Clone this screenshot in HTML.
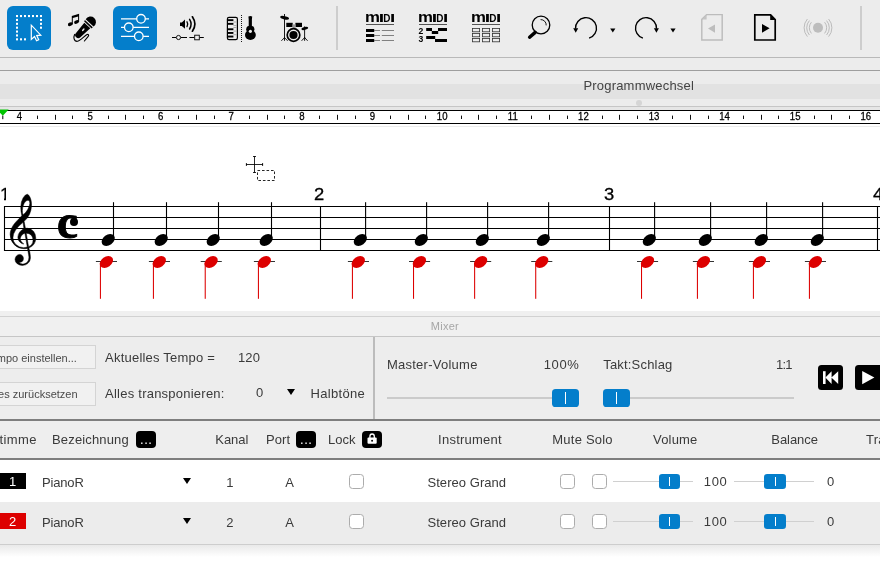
<!DOCTYPE html>
<html lang="de">
<head>
<meta charset="utf-8">
<title>Mixer</title>
<style>
html,body{margin:0;padding:0;}
body{width:880px;height:580px;overflow:hidden;background:#fff;position:relative;
  font-family:"Liberation Sans",sans-serif;color:#333;}
#app{position:absolute;left:0;top:0;width:880px;height:580px;overflow:hidden;will-change:transform;}
.abs{position:absolute;}
#toolbar{left:0;top:0;width:880px;height:57px;background:#ececec;}
#strip1{left:0;top:57px;width:880px;height:53px;background:#ececec;}
.hl{position:absolute;left:0;width:880px;height:1px;}
.tbtn{position:absolute;top:6px;width:44px;height:44px;border-radius:6px;background:#047ecb;}
.vsep{position:absolute;top:6px;width:2px;height:44px;background:#cdcdcd;}
#ruler{left:0;top:110px;width:880px;height:12px;background:#fff;border-top:1px solid #000;border-bottom:1px solid #000;}
#score{left:0;top:125px;width:880px;height:186px;background:#fff;}
#mixer{left:0;top:311px;width:880px;height:109px;background:#ededed;}
.mn{position:absolute;top:58.6px;font-size:17.2px;line-height:20px;color:#000;-webkit-text-stroke:0.3px #000;transform:scaleX(1.07);transform-origin:0 0;}
.t{position:absolute;white-space:nowrap;line-height:16px;font-size:13px;color:#3a3a3a;}
.btn{position:absolute;height:20px;background:#f1f1f1;border:1px solid #d4d4d4;box-sizing:border-box;}
#thead{left:0;top:421px;width:880px;height:37px;background:#eeeeee;}
#row1{left:0;top:460px;width:880px;height:42px;background:#fff;}
#row2{left:0;top:502px;width:880px;height:42px;background:#ececec;}
.badge{position:absolute;left:0;width:26px;height:15.8px;color:#fff;font-size:13px;line-height:17.2px;text-align:center;text-indent:-0.6px;}
.cb{position:absolute;width:14.5px;height:14.4px;border:1.4px solid #acacac;border-radius:3.5px;background:#fff;box-sizing:border-box;}
.track{position:absolute;height:1px;background:#d0d0d0;}
.knob{position:absolute;width:21.9px;height:15.3px;border-radius:3.2px;background:#047ecb;}
.knob:after{content:"";position:absolute;left:10.5px;top:3px;width:1px;height:9.4px;background:#fff;}

.s11{font-size:11px !important;color:#4a4a4a !important;}
.c{text-align:center;}
.tri{position:absolute;width:0;height:0;border-left:4.1px solid transparent;border-right:4.1px solid transparent;border-top:6px solid #000;}
.dots{position:absolute;width:19.6px;height:17.2px;color:#fff;font-size:13px;line-height:17.6px;text-align:center;letter-spacing:0.5px;text-indent:0.5px;}
.knob.big{width:27.4px;height:18.3px;border-radius:3.6px;}
.knob.big:after{left:13.25px;top:3.4px;width:0.95px;height:11.8px;}
.bk{position:absolute;background:#000;border-radius:3px;}
svg{position:absolute;left:0;top:0;overflow:visible;}
</style>
</head>
<body>
<div id="app">
<div id="toolbar" class="abs">
<div class="tbtn" style="left:7px"></div>
<div class="tbtn" style="left:113px"></div>
<div class="vsep" style="left:336px"></div>
<div class="vsep" style="left:860px"></div>
<svg id="tbicons" width="880" height="57" viewBox="0 0 880 57">
<!-- select tool -->
<g fill="#fff"><rect x="16" y="15" width="2" height="2.1"/><rect x="20" y="15" width="2" height="2.1"/><rect x="24" y="15" width="2" height="2.1"/><rect x="28" y="15" width="2" height="2.1"/><rect x="32" y="15" width="2" height="2.1"/><rect x="36" y="15" width="2" height="2.1"/><rect x="40" y="15" width="2" height="2.1"/><rect x="16" y="18.88" width="2" height="2.1"/><rect x="16" y="22.76" width="2" height="2.1"/><rect x="16" y="26.64" width="2" height="2.1"/><rect x="16" y="30.52" width="2" height="2.1"/><rect x="16" y="34.40" width="2" height="2.1"/><rect x="16" y="38.28" width="2" height="2.1"/><rect x="40" y="18.88" width="2" height="2.1"/><rect x="40" y="22.76" width="2" height="2.1"/><rect x="40" y="26.64" width="2" height="2.1"/><rect x="20" y="38.28" width="2" height="2.1"/><rect x="24" y="38.28" width="2" height="2.1"/></g>
<path d="M31.3 25.2 L31.3 39.4 L34.5 36.5 L36.6 40.7 L38.7 39.7 L36.7 35.6 L40.8 35.2 Z" fill="#047ecb" stroke="#fff" stroke-width="1.2" stroke-linejoin="miter"/>
<!-- mic -->
<g fill="#000" stroke="none">
<ellipse cx="70.3" cy="24.2" rx="2.5" ry="1.7" transform="rotate(-22 70.3 24.2)"/>
<ellipse cx="76.5" cy="22" rx="2.5" ry="1.7" transform="rotate(-22 76.5 22)"/>
<path d="M71.8 15.9 L79.1 13.8 L79.1 22 L78.1 22 L78.1 16.6 L72.8 18.1 L72.8 24.2 L71.8 24.2 Z"/>
<g transform="translate(90.5 22) rotate(43)">
<path d="M-5.35 1.3 A5.5 5.5 0 1 1 5.35 1.3 Z"/>
<rect x="-5.3" y="2.3" width="10.6" height="1.6" rx="0.5"/>
<path d="M-4.1 4.7 H4.1 L3 18 A3 3 0 0 1 -3 18 Z"/>
<ellipse cx="0" cy="10.6" rx="0.8" ry="1.7" fill="#ececec"/>
</g>
</g>
<path d="M74.6 34.4 C73.4 37 73.6 41.5 77.4 41.3 C79.6 41.2 84 36.4 86.6 34.7 C88.4 33.7 89.3 35.4 88 36.7 L84.4 41" fill="none" stroke="#000" stroke-width="1.15" stroke-linecap="round"/>
<!-- sliders -->
<g stroke="#fff" stroke-width="1.3" fill="#047ecb">
<path d="M121 18.8 H149 M121 27.3 H149 M121 36.3 H149"/>
<circle cx="141" cy="18.8" r="4.3"/><circle cx="128.8" cy="27.3" r="4.3"/><circle cx="138.8" cy="36.3" r="4.3"/>
</g>
<!-- speaker / automation -->
<path d="M180 22.4 H181.8 L185 19.6 V28.8 L181.8 26 H180 Z" fill="#000"/>
<g fill="none" stroke="#000" stroke-linecap="round">
<path d="M187 21.8 Q188.6 24.2 187 26.6" stroke-width="1.3"/>
<path d="M189.6 19.4 Q192.6 24.2 189.6 29" stroke-width="1.5"/>
<path d="M192.4 16.8 Q197.4 24.2 192.4 31.2" stroke-width="1.7"/>
</g>
<path d="M172 37.5 H176.3 M180.8 37.5 H187 M189.4 37.5 H194.4 M199.6 37.5 H203.8" stroke="#000" stroke-width="1"/>
<circle cx="178.5" cy="37.5" r="2.1" fill="#ececec" stroke="#000" stroke-width="0.9"/>
<rect x="194.7" y="35.2" width="4.6" height="4.6" fill="#ececec" stroke="#000" stroke-width="0.9"/>
<!-- piano / guitar -->
<rect x="227.4" y="17.4" width="10" height="22.2" rx="1.6" fill="#ececec" stroke="#000" stroke-width="1.2"/>
<g fill="#000"><rect x="227.6" y="19.2" width="5.8" height="1.9"/><rect x="227.6" y="22.9" width="5.8" height="1.9"/><rect x="227.6" y="28.3" width="5.8" height="1.9"/><rect x="227.6" y="32" width="5.8" height="1.9"/><rect x="227.6" y="35.6" width="5.8" height="1.9"/></g>
<g fill="#a8a8a8"><rect x="233.4" y="21.5" width="3.4" height="1"/><rect x="233.4" y="25.1" width="3.4" height="1"/><rect x="233.4" y="27" width="3.4" height="1"/><rect x="233.4" y="30.6" width="3.4" height="1"/><rect x="233.4" y="34.2" width="3.4" height="1"/></g>
<path d="M241.5 15 V42" stroke="#000" stroke-width="0.9" stroke-dasharray="1 1"/>
<path d="M248.4 16.6 Q250.3 15.6 252.2 16.6 L251.9 19.4 L251.9 26.4 L248.7 26.4 L248.7 19.4 Z" fill="#000"/>
<ellipse cx="250.3" cy="29.2" rx="4.1" ry="3.4" fill="#000"/><ellipse cx="250.4" cy="35" rx="5.4" ry="5" fill="#000"/>
<circle cx="250.4" cy="31.3" r="1.6" fill="#ececec"/>
<!-- drums -->
<g stroke="#000" fill="none" stroke-width="0.9">
<path d="M284.5 14 V38 M284.5 37.6 L281.4 40.8 M284.5 37.6 L287.6 40.8 M284.5 37 V40.8"/>
<path d="M304.6 26.4 V38 M304.6 37.6 L301.6 40.8 M304.6 37.6 L307.6 40.8 M304.6 37 V40.8"/>
</g>
<ellipse cx="284.6" cy="17.8" rx="4.5" ry="1.7" fill="#000" transform="rotate(12 284.6 17.8)"/>
<ellipse cx="304.8" cy="28.4" rx="3.4" ry="1.5" fill="#000" transform="rotate(-14 304.8 28.4)"/>
<rect x="286.3" y="22.8" width="6.4" height="4.2" fill="#000"/><rect x="295.4" y="22.8" width="6.6" height="4.2" fill="#000"/>
<rect x="292.4" y="24.4" width="3.2" height="3.6" fill="#9a9a9a"/>
<circle cx="293.5" cy="35" r="6.3" fill="#ececec" stroke="#000" stroke-width="1.7"/>
<circle cx="293.5" cy="35" r="4.1" fill="#000"/>

<!-- separators drawn as divs -->
<!-- MIDI icons -->
<g font-family="'Liberation Sans',sans-serif" font-weight="bold" fill="#000">
<text transform="translate(364.89 21.9) scale(1.681 1.467)" font-size="10.0">m</text><text transform="translate(378.70 21.9) scale(1.944 1.148)" font-size="10.0">I</text><text transform="translate(383.33 21.9) scale(0.995 1.148)" font-size="10.0">D</text><text transform="translate(390.05 21.9) scale(1.874 1.148)" font-size="10.0">I</text>
<text transform="translate(417.89 21.9) scale(1.681 1.467)" font-size="10.0">m</text><text transform="translate(431.70 21.9) scale(1.944 1.148)" font-size="10.0">I</text><text transform="translate(436.33 21.9) scale(0.995 1.148)" font-size="10.0">D</text><text transform="translate(443.05 21.9) scale(1.874 1.148)" font-size="10.0">I</text>
<text transform="translate(470.89 21.9) scale(1.681 1.467)" font-size="10.0">m</text><text transform="translate(484.70 21.9) scale(1.944 1.148)" font-size="10.0">I</text><text transform="translate(489.33 21.9) scale(0.995 1.148)" font-size="10.0">D</text><text transform="translate(496.05 21.9) scale(1.874 1.148)" font-size="10.0">I</text>
<text x="418.6" y="34.2" font-size="8.6">2</text>
<text x="418.6" y="42.2" font-size="8.6">3</text>
</g>
<path d="M366 24.5 H394 M419 24.5 H447 M472 24.5 H500" stroke="#444" stroke-width="0.9"/>
<g fill="#000"><rect x="366" y="29" width="8.2" height="3"/><rect x="366" y="34" width="8.2" height="3"/><rect x="366" y="39" width="8.2" height="3"/></g>
<path d="M374 30.5 H380 M381.8 30.5 H394 M374 35.5 H380 M381.8 35.5 H394 M374 40.5 H380 M381.8 40.5 H394" stroke="#666" stroke-width="0.8"/>
<g fill="#000"><rect x="426.2" y="28" width="5.8" height="3"/><rect x="431.8" y="31" width="6.4" height="3"/><rect x="438" y="28" width="9" height="3"/><rect x="426.2" y="36" width="9" height="3"/><rect x="435" y="39" width="12" height="3"/></g>
<g fill="none" stroke="#333" stroke-width="0.8">
<rect x="472.4" y="28.4" width="7.2" height="3.4"/><rect x="482.4" y="28.4" width="7.2" height="3.4"/><rect x="492.4" y="28.4" width="7.2" height="3.4"/>
<rect x="472.4" y="33.4" width="7.2" height="3.4"/><rect x="482.4" y="33.4" width="7.2" height="3.4"/><rect x="492.4" y="33.4" width="7.2" height="3.4"/>
<rect x="472.4" y="38.4" width="7.2" height="3.4"/><rect x="482.4" y="38.4" width="7.2" height="3.4"/><rect x="492.4" y="38.4" width="7.2" height="3.4"/>
</g>
<!-- magnifier -->
<circle cx="541" cy="25" r="8.8" fill="none" stroke="#000" stroke-width="1.3"/>
<path d="M540.6 19.6 A5.4 5.4 0 0 1 546.2 25.4" fill="none" stroke="#000" stroke-width="0.9"/>
<path d="M535.2 32.4 L529.6 37.2" stroke="#000" stroke-width="3.4" stroke-linecap="round"/>
<!-- undo -->
<path d="M575.5 28.7 A10.5 10.5 0 1 1 589.1 38.2" fill="none" stroke="#000" stroke-width="1.37"/>
<path d="M573.2 28.3 H578.2 L575.7 32.7 Z" fill="#000"/>
<path d="M610.2 28.5 H615.4 L612.8 32.6 Z" fill="#000"/>
<!-- redo -->
<path d="M656.5 28.7 A10.5 10.5 0 1 0 642.9 38.2" fill="none" stroke="#000" stroke-width="1.37"/>
<path d="M653.9 28.3 H658.9 L656.4 32.7 Z" fill="#000"/>
<path d="M670.4 28.5 H675.6 L673 32.6 Z" fill="#000"/>
<!-- page prev (disabled) -->
<path d="M706.6 14.6 H722.2 V40 H701.8 V19.4 Z" fill="none" stroke="#bcbcbc" stroke-width="1.45"/>
<path d="M706.6 14.6 V19.4 H701.8 Z" fill="#c4c4c4"/>
<path d="M708 28.5 L715 24.4 V32.7 Z" fill="#bdbdbd"/>
<!-- page next -->
<path d="M754.8 14.8 H770.6 L775.2 19.6 V40 H754.8 Z" fill="none" stroke="#000" stroke-width="1.7"/>
<path d="M770.2 14.4 V20 H775.8 Z" fill="#000"/>
<path d="M762 23.9 L769.6 28.3 L762 32.7 Z" fill="#000"/>
<!-- record (disabled) -->
<circle cx="818" cy="27.8" r="5" fill="#bdbdbd"/>
<g fill="none" stroke="#b8b8b8" stroke-width="0.95">
<path d="M811.4 22.2 A8.6 8.6 0 0 0 811.4 33.4 M824.6 22.2 A8.6 8.6 0 0 1 824.6 33.4"/>
<path d="M809.4 20.6 A11 11 0 0 0 809.4 35 M826.6 20.6 A11 11 0 0 1 826.6 35"/>
<path d="M807.4 19 A13.4 13.4 0 0 0 807.4 36.6 M828.6 19 A13.4 13.4 0 0 1 828.6 36.6"/>
</g>
</svg>
</div>
<div id="strip1" class="abs">
<div class="hl" style="top:0;background:#b9b9b9"></div>
<div class="hl" style="top:13px;background:#9e9e9e"></div>
<div class="abs" style="left:0;top:27px;width:880px;height:15px;background:#e2e2e2"></div>
<div class="hl" style="top:49px;background:#c6c6c6"></div>
<div class="abs" style="left:0;top:50px;width:880px;height:3px;background:#e6e6e6"></div>
<div class="t" id="t_prog" style="left:583.4px;top:21px;font-size:13px;color:#444;letter-spacing:0.2px">Programmwechsel</div>
<div class="abs" style="left:636px;top:42.5px;width:6px;height:6px;border-radius:3px;background:#d5d5d5"></div>
</div>
<div id="ruler" class="abs">
<svg width="880" height="14" viewBox="0 110 880 14" style="top:-1px">
<path d="M-3 109.6 H8.7 L2.8 115.8 Z" fill="#00c400"/>
<path d="M2.8 115.6 V119.2" stroke="#000" stroke-width="1"/>
<path d="M37.5 115.6 V119 M55.5 114.8 V119.8 M72.5 115.6 V119 M108.5 115.6 V119 M125.5 114.8 V119.8 M143.5 115.6 V119 M178.5 115.6 V119 M196.5 114.8 V119.8 M214.5 115.6 V119 M249.5 115.6 V119 M267.5 114.8 V119.8 M284.5 115.6 V119 M319.5 115.6 V119 M337.5 114.8 V119.8 M355.5 115.6 V119 M390.5 115.6 V119 M408.5 114.8 V119.8 M425.5 115.6 V119 M461.5 115.6 V119 M478.5 114.8 V119.8 M496.5 115.6 V119 M531.5 115.6 V119 M549.5 114.8 V119.8 M567.5 115.6 V119 M602.5 115.6 V119 M619.5 114.8 V119.8 M637.5 115.6 V119 M672.5 115.6 V119 M690.5 114.8 V119.8 M708.5 115.6 V119 M743.5 115.6 V119 M761.5 114.8 V119.8 M778.5 115.6 V119 M814.5 115.6 V119 M831.5 114.8 V119.8 M849.5 115.6 V119 M884.5 115.6 V119 M902.5 114.8 V119.8 M920.5 115.6 V119 " stroke="#111" stroke-width="1" fill="none"/>
<g font-family="'Liberation Sans',sans-serif" font-size="9.6" text-anchor="middle" fill="#000" stroke="#000" stroke-width="0.25" transform="translate(0,119.9) scale(1,1.06)"><text x="19.5" y="0">4</text><text x="90.1" y="0">5</text><text x="160.7" y="0">6</text><text x="231.3" y="0">7</text><text x="301.9" y="0">8</text><text x="372.5" y="0">9</text><text x="442.2" y="0">10</text><text x="512.8" y="0">11</text><text x="583.4" y="0">12</text><text x="654.0" y="0">13</text><text x="724.6" y="0">14</text><text x="795.2" y="0">15</text><text x="865.8" y="0">16</text></g>
</svg>
</div>
<div id="score" class="abs">
<div class="hl" style="top:1px;background:#ececec"></div>
<svg width="880" height="186" viewBox="0 125 880 186">
<path d="M4 206.5 H880 M4 217.5 H880 M4 228.5 H880 M4 239.5 H880 M4 250.5 H880" stroke="#000" stroke-width="1"/>
<path d="M4.5 206 V251 M320.5 206 V251 M609.5 206 V251 M877.5 206 V251" stroke="#000" stroke-width="1.1"/>
<path d="M95.9 261.5 H117.0 M148.9 261.5 H170.0 M200.7 261.5 H221.8 M253.9 261.5 H275.0 M347.9 261.5 H369.0 M409.0 261.5 H430.1 M470.1 261.5 H491.2 M531.2 261.5 H552.3 M637.0 261.5 H658.1 M692.9 261.5 H714.0 M748.9 261.5 H770.0 M804.9 261.5 H826.0 " stroke="#000" stroke-width="0.8"/>
<g transform="translate(0,232) skewX(-1.8) translate(0,-232) translate(10.2,194.3) scale(0.06114,-0.05970) translate(-120,-900)"><path d="M434 2Q464 -103 464 -170Q464 -223 427.0 -257.0Q390 -291 337 -291Q287 -291 250.0 -261.5Q213 -232 213 -190Q213 -160 233.5 -133.5Q254 -107 283.5 -107.0Q313 -107 331.5 -128.5Q350 -150 350 -178Q350 -240 280 -240Q298 -268 338 -268Q353 -268 368.5 -263.5Q384 -259 401.0 -248.0Q418 -237 428.5 -213.5Q439 -190 439 -157Q439 -136 411 -6Q389 -12 356 -12Q259 -12 189.5 60.0Q120 132 120 232Q120 267 131.5 303.0Q143 339 157.5 366.5Q172 394 200.5 428.5Q229 463 248.5 483.5Q268 504 303 539Q280 621 280 689Q280 779 313.0 839.5Q346 900 379 900Q389 900 401.5 887.0Q414 874 426.0 851.0Q438 828 446.5 790.5Q455 753 455 710Q455 551 342 447L368 329Q384 332 397 332Q458 332 500.0 282.5Q542 233 542 162Q542 44 434 2ZM426 746Q426 801 394 801Q358 801 333.0 748.0Q308 695 308 630Q308 588 321 557Q359 580 392.5 639.5Q426 699 426 746ZM498 128Q498 183 466.0 216.0Q434 249 383 249L428 23Q498 52 498 128ZM407 17 361 247Q334 241 311.5 214.0Q289 187 289 158Q289 143 295.0 128.5Q301 114 309.5 104.0Q318 94 327.0 86.0Q336 78 342.0 74.5Q348 71 348 71L340 66Q307 75 277.5 106.0Q248 137 248 184Q248 231 277.5 270.5Q307 310 343 323L325 430Q168 299 168 177Q168 104 223.0 55.0Q278 6 348 6Q365 6 407 17Z" fill="#000" stroke="#000" stroke-width="8" stroke-linejoin="round"/></g>
<g fill="#000"><ellipse cx="108.2" cy="240" rx="7.2" ry="5.2" transform="rotate(-35 108.2 240)"/><rect x="112.95" y="202.2" width="1.1" height="36"/><ellipse cx="161.2" cy="240" rx="7.2" ry="5.2" transform="rotate(-35 161.2 240)"/><rect x="165.95" y="202.2" width="1.1" height="36"/><ellipse cx="213.2" cy="240" rx="7.2" ry="5.2" transform="rotate(-35 213.2 240)"/><rect x="217.95" y="202.2" width="1.1" height="36"/><ellipse cx="266.2" cy="240" rx="7.2" ry="5.2" transform="rotate(-35 266.2 240)"/><rect x="270.95" y="202.2" width="1.1" height="36"/><ellipse cx="360.3" cy="240" rx="7.2" ry="5.2" transform="rotate(-35 360.3 240)"/><rect x="365.05" y="202.2" width="1.1" height="36"/><ellipse cx="421.3" cy="240" rx="7.2" ry="5.2" transform="rotate(-35 421.3 240)"/><rect x="426.05" y="202.2" width="1.1" height="36"/><ellipse cx="482.3" cy="240" rx="7.2" ry="5.2" transform="rotate(-35 482.3 240)"/><rect x="487.05" y="202.2" width="1.1" height="36"/><ellipse cx="543.3" cy="240" rx="7.2" ry="5.2" transform="rotate(-35 543.3 240)"/><rect x="548.05" y="202.2" width="1.1" height="36"/><ellipse cx="649.3" cy="240" rx="7.2" ry="5.2" transform="rotate(-35 649.3 240)"/><rect x="654.05" y="202.2" width="1.1" height="36"/><ellipse cx="705.3" cy="240" rx="7.2" ry="5.2" transform="rotate(-35 705.3 240)"/><rect x="710.05" y="202.2" width="1.1" height="36"/><ellipse cx="761.3" cy="240" rx="7.2" ry="5.2" transform="rotate(-35 761.3 240)"/><rect x="766.05" y="202.2" width="1.1" height="36"/><ellipse cx="817.3" cy="240" rx="7.2" ry="5.2" transform="rotate(-35 817.3 240)"/><rect x="822.05" y="202.2" width="1.1" height="36"/></g>
<g fill="#dd0000"><ellipse cx="106.4" cy="262" rx="7.2" ry="5.2" transform="rotate(-35 106.4 262)"/><rect x="99.90" y="263" width="1.05" height="35.8"/><ellipse cx="159.3" cy="262" rx="7.2" ry="5.2" transform="rotate(-35 159.3 262)"/><rect x="152.90" y="263" width="1.05" height="35.8"/><ellipse cx="211.1" cy="262" rx="7.2" ry="5.2" transform="rotate(-35 211.1 262)"/><rect x="204.70" y="263" width="1.05" height="35.8"/><ellipse cx="264.3" cy="262" rx="7.2" ry="5.2" transform="rotate(-35 264.3 262)"/><rect x="257.90" y="263" width="1.05" height="35.8"/><ellipse cx="358.3" cy="262" rx="7.2" ry="5.2" transform="rotate(-35 358.3 262)"/><rect x="351.90" y="263" width="1.05" height="35.8"/><ellipse cx="419.4" cy="262" rx="7.2" ry="5.2" transform="rotate(-35 419.4 262)"/><rect x="413.00" y="263" width="1.05" height="35.8"/><ellipse cx="480.6" cy="262" rx="7.2" ry="5.2" transform="rotate(-35 480.6 262)"/><rect x="474.10" y="263" width="1.05" height="35.8"/><ellipse cx="541.7" cy="262" rx="7.2" ry="5.2" transform="rotate(-35 541.7 262)"/><rect x="535.20" y="263" width="1.05" height="35.8"/><ellipse cx="647.5" cy="262" rx="7.2" ry="5.2" transform="rotate(-35 647.5 262)"/><rect x="641.00" y="263" width="1.05" height="35.8"/><ellipse cx="703.4" cy="262" rx="7.2" ry="5.2" transform="rotate(-35 703.4 262)"/><rect x="696.90" y="263" width="1.05" height="35.8"/><ellipse cx="759.4" cy="262" rx="7.2" ry="5.2" transform="rotate(-35 759.4 262)"/><rect x="752.90" y="263" width="1.05" height="35.8"/><ellipse cx="815.4" cy="262" rx="7.2" ry="5.2" transform="rotate(-35 815.4 262)"/><rect x="808.90" y="263" width="1.05" height="35.8"/></g>
<!-- cursor -->
<g stroke="#000" stroke-width="0.85" fill="none">
<path d="M254.5 156.2 V172.8 M246 164.5 H263 M253 156.5 H256 M253 172.5 H256 M246.4 163 V166 M262.6 163 V166"/>
<rect x="257.5" y="170.5" width="17" height="10" stroke-dasharray="2.6 1.9"/>
</g>
</svg>
<div class="abs" style="left:56.8px;top:66.5px;font-family:'Liberation Serif',serif;font-weight:bold;font-size:49px;line-height:60px;color:#000;-webkit-text-stroke:1px #000;transform:scaleX(0.96);transform-origin:0 0">c</div>
<div class="abs" style="left:69.9px;top:93.4px;width:7.8px;height:7.8px;border-radius:50%;background:#000"></div>
<div class="abs" style="left:0;top:58px;width:6.15px;height:22px;overflow:hidden"><div class="mn" style="left:-0.3px;top:0.6px">1</div><div class="abs" style="left:0;top:14.2px;width:4.3px;height:3.4px;background:#fff"></div></div><div class="mn" style="left:314.4px">2</div><div class="mn" style="left:603.9px">3</div><div class="mn" style="left:872.5px">4</div>
</div>
<div id="mixer" class="abs">
<div class="abs" style="left:0;top:0;width:880px;height:25px;background:#f0f0f0"></div>
<div class="hl" style="top:5px;background:#d2d2d2"></div>
<div class="hl" style="top:25px;background:#c6c6c6"></div>
<div class="t" id="t_mixer" style="left:430.70px;top:7px;font-size:11px;color:#a6a6a6;letter-spacing:0.3px">Mixer</div>
<div class="btn" style="left:-10px;top:34px;width:106px;height:24px"></div>
<div class="btn" style="left:-10px;top:71px;width:106px;height:24px"></div>
<div class="t s11" id="t_b1" style="right:803.15px;top:38.5px">Tempo einstellen...</div>
<div class="t s11" id="t_b2" style="right:802.45px;top:75px">Alles zurücksetzen</div>
<div class="t" id="t_akt" style="left:105.10px;top:38.5px;letter-spacing:0.21px">Aktuelles Tempo =</div>
<div class="t" id="t_120" style="left:237.90px;top:38.5px;letter-spacing:0.25px">120</div>
<div class="t" id="t_alles" style="left:105.10px;top:74.5px;letter-spacing:0.234px">Alles transponieren:</div>
<div class="t" id="t_0" style="left:255.90px;top:74px">0</div>
<div class="tri" style="left:287px;top:78.4px"></div>
<div class="t" id="t_halb" style="left:310.55px;top:74.5px;letter-spacing:0.3px">Halbtöne</div>
<div class="abs" style="left:373px;top:26px;width:1.5px;height:83px;background:#bcbcbc"></div>
<div class="t" id="t_mv" style="left:386.9px;top:45.5px;letter-spacing:0.26px">Master-Volume</div>
<div class="t" id="t_100p" style="left:543.70px;top:45.5px;letter-spacing:0.65px">100%</div>
<div class="t" id="t_takt" style="left:603.20px;top:45.5px;letter-spacing:0.19px">Takt:Schlag</div>
<div class="t" id="t_11" style="left:776.00px;top:45.5px;letter-spacing:-0.85px">1:1</div>
<div class="abs" style="left:387px;top:86.2px;width:407px;height:1.5px;background:#cbcbcb"></div>
<div class="abs" style="left:579px;top:84px;width:24px;height:6px;background:#ededed"></div>
<div class="knob big" style="left:551.8px;top:77.7px"></div>
<div class="knob big" style="left:602.7px;top:77.7px"></div>
<div class="bk" style="left:818px;top:54px;width:25px;height:25px;border-radius:3.5px"></div>
<div class="bk" style="left:855px;top:54px;width:30px;height:25px;border-radius:3.5px"></div>
<svg width="880" height="109" viewBox="0 311 880 109">
<g fill="#fff"><rect x="823" y="371.2" width="2.6" height="12.8"/><path d="M825.4 377.6 L831.6 371.2 V384 Z M831.4 377.6 L838.2 371.2 V384 Z"/><path d="M862.2 371 L874.4 377.6 L862.2 384.3 Z"/></g>
</svg>
</div>
<div class="hl" style="top:419px;height:2px;background:#7e7e7e"></div>
<div id="thead" class="abs">
<div class="t" id="h_stimme" style="right:843.2px;top:10.6px;letter-spacing:0.4px">Stimme</div>
<div class="t" id="h_bez" style="left:52.05px;top:10.6px;letter-spacing:0.15px">Bezeichnung</div>
<div class="bk" style="left:136.2px;top:10.2px;width:19.6px;height:17.2px;border-radius:4px"></div>
<div class="dots" style="left:136.2px;top:10.2px">...</div>
<div class="t" id="h_kanal" style="left:215.35px;top:10.6px;letter-spacing:-0.075px">Kanal</div>
<div class="t" id="h_port" style="left:266.0px;top:10.6px;letter-spacing:0.08px">Port</div>
<div class="bk" style="left:296.2px;top:10.2px;width:19.6px;height:17.2px;border-radius:4px"></div>
<div class="dots" style="left:296.2px;top:10.2px">...</div>
<div class="t" id="h_lock" style="left:328.0px;top:10.6px;letter-spacing:0px">Lock</div>
<div class="bk" style="left:362px;top:10.2px;width:19.8px;height:17.2px;border-radius:4px"></div>
<svg width="880" height="37" viewBox="0 421 880 37"><rect x="367.5" y="437.6" width="9.2" height="6.2" rx="1" fill="#fff"/><path d="M369.9 438 V436.4 A2.2 2.4 0 0 1 374.3 436.4 V438" fill="none" stroke="#fff" stroke-width="1.3"/><circle cx="372.1" cy="440.8" r="0.95" fill="#000"/></svg>
<div class="t" id="h_instr" style="left:438.1px;top:10.6px;letter-spacing:0.235px">Instrument</div>
<div class="t" id="h_mute" style="left:552.3px;top:10.6px;letter-spacing:0.22px">Mute Solo</div>
<div class="t" id="h_vol" style="left:653.10px;top:10.6px;letter-spacing:0.17px">Volume</div>
<div class="t" id="h_bal" style="left:771.35px;top:10.6px;letter-spacing:-0.07px">Balance</div>
<div class="t" id="h_tra" style="left:866.00px;top:10.6px;letter-spacing:0.2px">Transponieren</div>
</div>
<div class="hl" style="top:458px;height:2px;background:#7e7e7e"></div>
<div class="hl" style="top:460px;height:2px;background:#ebebeb"></div>
<div id="row1" class="abs">
<div class="badge" style="top:13px;background:#000">1</div>
<div class="t" id="r1_name" style="left:41.95px;top:15.2px;letter-spacing:-0.15px">PianoR</div>
<div class="tri" style="left:183.2px;top:18px"></div>
<div class="t c" id="r1_kanal" style="left:219.8px;width:20px;top:15.2px">1</div>
<div class="t c" id="r1_port" style="left:279.6px;width:20px;top:15.2px">A</div>
<div class="cb" style="left:349.2px;top:14.399999999999977px"></div>
<div class="t" id="r1_instr" style="left:427.5px;top:15.2px;letter-spacing:0.046px">Stereo Grand</div>
<div class="cb" style="left:560px;top:14.399999999999977px"></div>
<div class="cb" style="left:592.2px;top:14.399999999999977px"></div>
<div class="track" style="left:613.2px;width:79.4px;top:21.19999999999999px"></div>
<div class="knob" style="left:658.5px;top:13.600000000000023px"></div>
<div class="t" id="r1_vol" style="left:703.75px;top:14.4px;letter-spacing:0.65px">100</div>
<div class="track" style="left:734.1px;width:80.4px;top:21.19999999999999px"></div>
<div class="knob" style="left:764.1px;top:13.600000000000023px"></div>
<div class="t" id="r1_bal" style="left:827.10px;top:14.4px">0</div>
</div>
<div id="row2" class="abs">
<div class="badge" style="top:11px;background:#dd0000">2</div>
<div class="t" id="r2_name" style="left:41.95px;top:13.2px;letter-spacing:-0.15px">PianoR</div>
<div class="tri" style="left:183.2px;top:16px"></div>
<div class="t c" id="r2_kanal" style="left:219.8px;width:20px;top:13.2px">2</div>
<div class="t c" id="r2_port" style="left:279.6px;width:20px;top:13.2px">A</div>
<div class="cb" style="left:349.2px;top:12.399999999999977px"></div>
<div class="t" id="r2_instr" style="left:427.5px;top:13.2px;letter-spacing:0.046px">Stereo Grand</div>
<div class="cb" style="left:560px;top:12.399999999999977px"></div>
<div class="cb" style="left:592.2px;top:12.399999999999977px"></div>
<div class="track" style="left:613.2px;width:79.4px;top:19.200000000000045px"></div>
<div class="knob" style="left:658.5px;top:11.600000000000023px"></div>
<div class="t" id="r2_vol" style="left:703.75px;top:12.4px;letter-spacing:0.65px">100</div>
<div class="track" style="left:734.1px;width:80.4px;top:19.200000000000045px"></div>
<div class="knob" style="left:764.1px;top:11.600000000000023px"></div>
<div class="t" id="r2_bal" style="left:827.10px;top:12.4px">0</div>
</div>
<div class="hl" style="top:544px;background:#cdcdcd"></div>
<div class="abs" style="left:0;top:545px;width:880px;height:12px;background:linear-gradient(#e9e9e9,#f4f4f4 50%,#fff)"></div>
</div>
</body>
</html>
